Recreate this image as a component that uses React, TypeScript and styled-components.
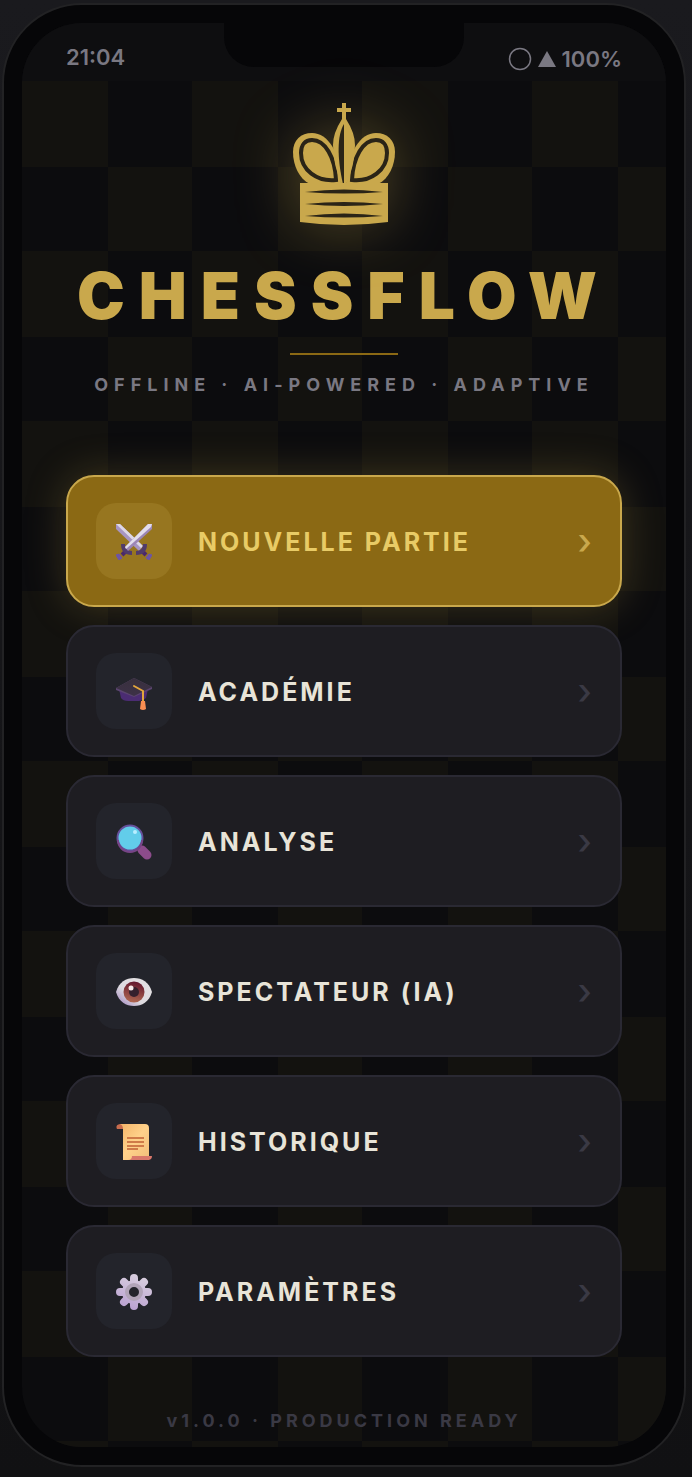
import React from 'react'
import styled, { createGlobalStyle, css } from 'styled-components'

const GlobalStyle = createGlobalStyle`
  * {
    box-sizing: border-box;
  }

  body {
    margin: 0;
    background: #131315;
    font-family: Inter, "Liberation Sans", sans-serif;
  }
`

const Page = styled.div`
  padding: 3px 6px 10px 2px;
  background: linear-gradient(180deg, #1a1a1e, #111113);
`

const Phone = styled.div`
  padding: 18px;
  border: 2px solid #222224;
  border-radius: 80px;
  background: #060608;
`

const Screen = styled.div`
  position: relative;
  overflow: hidden;
  border-radius: 60px;
  background: #0c0c0e;
`

const Notch = styled.div`
  position: absolute;
  top: 0;
  left: 50%;
  width: 240px;
  height: 44px;
  margin-left: -120px;
  border-radius: 0 0 30px 30px;
  background: #060608;
`

const StatusBar = styled.header`
  display: flex;
  align-items: flex-start;
  justify-content: space-between;
  height: 58px;
  padding: 20px 44px 0;
  background: #0e0e10;
  color: #7a7882;
  font-size: 22px;
  font-weight: 600;
  line-height: 28px;
`

const StatusIcons = styled.div`
  display: flex;
  align-items: center;
  gap: 6px;
  padding-top: 2px;
`

const Board = styled.main`
  display: flex;
  flex-direction: column;
  align-items: center;
  padding: 22px 44px 15px;
  background: conic-gradient(
      at 86px 86px,
      transparent 25%,
      #13120f 0 50%,
      transparent 0 75%,
      #13120f 0
    ) 0 0 / 170px 170px;
`

const King = styled.svg`
  width: 102px;
  height: 122px;
  filter: drop-shadow(0 0 30px rgba(201, 168, 76, 0.35));
`

const Title = styled.h1`
  margin: 39px 0 0;
  color: #c9a84c;
  font-size: 64px;
  font-weight: 900;
  letter-spacing: 14px;
  line-height: 64px;
`

const Rule = styled.div`
  width: 108px;
  height: 2px;
  margin: 25px 0 19px;
  background: #8b6914;
`

const Tagline = styled.p`
  margin: 0;
  color: #7a7882;
  font-size: 18px;
  font-weight: 700;
  letter-spacing: 6px;
  line-height: 22px;
  white-space: nowrap;
`

const Menu = styled.nav`
  display: flex;
  flex-direction: column;
  align-self: stretch;
  gap: 18px;
  margin: 79px 0 53px;
`

const IconTile = styled.span`
  display: flex;
  align-items: center;
  justify-content: center;
  width: 76px;
  height: 76px;
  padding-top: 2px;
  border-radius: 20px;
  background: #23242b;
`

const Label = styled.span`
  flex: 1;
  padding-top: 2px;
  text-align: left;
`

const Chevron = styled.span`
  color: #3a3944;
  font-size: 36px;
  font-weight: 500;
  letter-spacing: 0;
  line-height: 36px;
`

const MenuButton = styled.button<{ $primary?: boolean }>`
  display: flex;
  align-items: center;
  gap: 26px;
  padding: 26px 28px;
  border: 2px solid #2a2933;
  border-radius: 28px;
  background: #1e1d22;
  color: #e8e4d8;
  font-family: inherit;
  font-size: 25px;
  font-weight: 700;
  letter-spacing: 3px;
  cursor: pointer;

  ${({ $primary }) => $primary && css`
    border-color: #c9a84c;
    background: #8b6914;
    color: #e8cb66;
    box-shadow: 0 0 40px rgba(201, 168, 76, 0.25);

    ${IconTile} {
      background: #977620;
    }

    ${Chevron} {
      color: #c9a84c;
    }
  `}
`

const Version = styled.footer`
  color: #3a3944;
  font-size: 18px;
  font-weight: 700;
  letter-spacing: 4px;
  line-height: 22px;
`

const Icon = styled.svg`
  width: 36px;
  height: 36px;
`

const SwordsIcon = () => (
  <Icon viewBox="0 0 36 36" aria-hidden="true">
    <path d="M0 0h4l23 22-4 5L0 5z" fill="#a795c2" />
    <path d="M0 0h4l23 22-2 2z" fill="#ddd8e6" />
    <path d="M6 31l4-4M30 31l-4-4" stroke="#4b286b" strokeWidth="4" />
    <path d="M7 20q0 9 9 9M29 20q0 9-9 9" fill="none" stroke="#513b6b" strokeWidth="4" />
    <path d="M36 0h-4L9 23l3 4L36 5z" fill="#9c86b5" />
    <path d="M36 0h-4L9 23l1 2L35 3z" fill="#e2ddec" />
    <path d="M0 31l3-1 3 4-3 2zM36 31l-3-1-3 4 3 2z" fill="#6d55a5" stroke="#6d55a5" strokeLinejoin="round" />
  </Icon>
)

const CapIcon = () => (
  <Icon viewBox="0 0 36 36" aria-hidden="true">
    <defs>
      <linearGradient id="capTop" x1="0" y1="0" x2="0" y2="1">
        <stop stopColor="#38303d" />
        <stop offset="1" stopColor="#3d3147" />
      </linearGradient>
    </defs>
    <path d="M3 15h29l-2 9q-3 3-7 3H12q-5 0-7-3z" fill="#4b2c73" />
    <path d="M18 4l18 9v2l-18 8L0 16v-2z" fill="#5a4470" />
    <path d="M18 4l18 9-18 9L0 14z" fill="url(#capTop)" />
    <path d="M18 12l9 5v12" fill="none" stroke="#e2a63c" strokeWidth="2" strokeLinecap="round" />
    <path d="M25 27h4l1 8q-3 2-6 0z" fill="#f98e52" />
  </Icon>
)

const SearchIcon = () => (
  <Icon viewBox="0 0 36 36" aria-hidden="true">
    <path d="M23 23l9 8" stroke="#76406f" strokeWidth="5" />
    <path d="M26 26l5 5" stroke="#8c4c8b" strokeWidth="9" strokeLinecap="round" />
    <circle cx="14" cy="14" r="12.5" fill="#62cdea" stroke="#66509b" strokeWidth="2" />
    <path d="M2 16a12 12 0 0 0 24 0" fill="none" stroke="#774486" strokeWidth="2" />
    <circle cx="19" cy="8" r="2" fill="#b8eeff" />
  </Icon>
)

const EyeIcon = () => (
  <Icon viewBox="0 0 36 36" aria-hidden="true">
    <defs>
      <linearGradient id="eyeWhite" x1="1" y1="0" x2="0" y2="1">
        <stop stopColor="#e4e1e3" />
        <stop offset="0.6" stopColor="#dedbe0" />
        <stop offset="1" stopColor="#9a7cbb" />
      </linearGradient>
      <linearGradient id="iris" x1="0.6" y1="0" x2="0.4" y2="1">
        <stop stopColor="#62152d" />
        <stop offset="1" stopColor="#b06851" />
      </linearGradient>
    </defs>
    <path d="M0 18C3 8 10 4 18 4s15 4 18 14c-3 10-10 14-18 14S3 28 0 18z" fill="url(#eyeWhite)" />
    <circle cx="18" cy="18" r="10.5" fill="url(#iris)" />
    <circle cx="18" cy="18" r="5" fill="#35202d" />
    <circle cx="15" cy="14" r="2.5" fill="#f5e8e8" />
  </Icon>
)

const ScrollIcon = () => (
  <Icon viewBox="0 0 36 36" aria-hidden="true">
    <defs>
      <linearGradient id="paper" x1="0" y1="0" x2="1" y2="1">
        <stop stopColor="#f3b469" />
        <stop offset="0.5" stopColor="#ffd18a" />
        <stop offset="1" stopColor="#f0bd79" />
      </linearGradient>
    </defs>
    <path d="M4 0h6v5H1q-2-4 3-5z" fill="#c66b4d" />
    <path d="M4 0h25q4 0 4 4v32H7V5q0-4-3-5z" fill="url(#paper)" />
    <path d="M16 32h20q0 4-4 4H12q4 0 4-4z" fill="#d9776a" />
    <path d="M11 14h17M11 18h17M11 22h17M11 25h11" stroke="#cf7b49" strokeWidth="2" />
  </Icon>
)

const GearIcon = () => (
  <Icon viewBox="0 0 36 36" aria-hidden="true">
    <defs>
      <linearGradient id="gear" gradientUnits="userSpaceOnUse" x1="24" y1="0" x2="12" y2="36">
        <stop stopColor="#d9d0df" />
        <stop offset="1" stopColor="#b9a0d1" />
      </linearGradient>
    </defs>
    <path
      d="M18 4v28M4 18h28M8 8l20 20M28 8L8 28"
      stroke="url(#gear)"
      strokeWidth="8"
      strokeLinecap="round"
    />
    <circle cx="18" cy="18" r="12" fill="url(#gear)" />
    <circle cx="18" cy="18" r="7" fill="#23242b" stroke="#b1a4b8" strokeWidth="4" />
  </Icon>
)

const items = [
  { label: 'NOUVELLE PARTIE', icon: <SwordsIcon />, primary: true },
  { label: 'ACADÉMIE', icon: <CapIcon /> },
  { label: 'ANALYSE', icon: <SearchIcon /> },
  { label: 'SPECTATEUR (IA)', icon: <EyeIcon /> },
  { label: 'HISTORIQUE', icon: <ScrollIcon /> },
  { label: 'PARAMÈTRES', icon: <GearIcon /> },
]

const Lobe = () => (
  <>
    <path
      d="M17 81C6 76 0 62 0 49 0 37 8 30 19 30 35 30 48 50 48 80z"
      fill="#c9a84c"
    />
    <path
      d="M43 77C24 79 8 67 8 50 8 42 12 37 19 37 32 37 42 54 43 77z"
      fill="#c9a84c"
      stroke="#2a2417"
      strokeWidth="4"
    />
  </>
)

const App = () => {
  return (
    <Page>
      <GlobalStyle />
      <Phone>
        <Screen>
          <StatusBar>
            <span>21:04</span>
            <StatusIcons>
              <svg width="24" height="24" viewBox="0 0 24 24" aria-hidden="true">
                <circle cx="12" cy="12" r="10.5" fill="none" stroke="currentColor" strokeWidth="1.5" />
              </svg>
              <svg width="18" height="16" viewBox="0 0 18 16" aria-hidden="true">
                <path d="M9 0l9 16H0z" fill="currentColor" />
              </svg>
              <span>100%</span>
            </StatusIcons>
          </StatusBar>
          <Notch />
          <Board>
            <King viewBox="0 0 102 122" aria-hidden="true">
              <Lobe />
              <g transform="matrix(-1 0 0 1 102 0)">
                <Lobe />
              </g>
              <path d="M49 0h4v5h5v4h-5v7q9 14 9 26 0 20-9 40h-4q-9-20-9-40 0-12 9-26V9h-5V5h5z" fill="#c9a84c" />
              <path d="M51 21C44 32 44 55 50 81h1z" fill="#2a2417" />
              <path d="M7 80h88v39q-44 6-88 0z" fill="#c9a84c" />
              <path d="M12 89q39-5 78 0-39 3-78 0zM12 101q39-4 78 0-39 4-78 0zM12 113q39-5 78 0-39 3-78 0z" fill="#2a2417" />
            </King>
            <Title>CHESSFLOW</Title>
            <Rule />
            <Tagline>OFFLINE · AI-POWERED · ADAPTIVE</Tagline>
            <Menu>
              {items.map(({ label, icon, primary }) => (
                <MenuButton key={label} type="button" $primary={primary}>
                  <IconTile>{icon}</IconTile>
                  <Label>{label}</Label>
                  <Chevron aria-hidden="true">›</Chevron>
                </MenuButton>
              ))}
            </Menu>
            <Version>v1.0.0 · PRODUCTION READY</Version>
          </Board>
        </Screen>
      </Phone>
    </Page>
  )
}

export default App
